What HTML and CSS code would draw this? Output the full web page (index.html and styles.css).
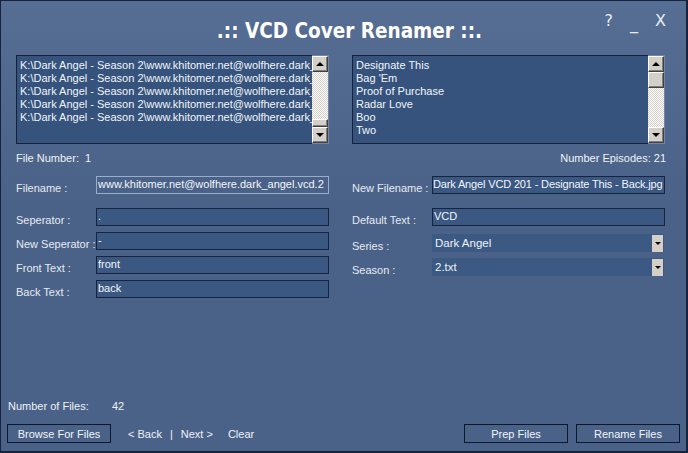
FILE: index.html
```html
<!DOCTYPE html>
<html>
<head>
<meta charset="utf-8">
<link rel="stylesheet" href="styles.css">
</head>
<body>
<div class="window">
  <header class="header">
    <div></div>
    <h1 class="title">.:: VCD Cover Renamer ::.</h1>
    <div class="controls"><span>?</span><span class="min">_</span><span>X</span></div>
  </header>

  <section class="lists">
    <div class="listbox">
      <ul class="list left-list">
        <li>K:\Dark Angel - Season 2\www.khitomer.net@wolfhere.dark_angel.vcd.201.jpg</li>
        <li>K:\Dark Angel - Season 2\www.khitomer.net@wolfhere.dark_angel.vcd.202.jpg</li>
        <li>K:\Dark Angel - Season 2\www.khitomer.net@wolfhere.dark_angel.vcd.203.jpg</li>
        <li>K:\Dark Angel - Season 2\www.khitomer.net@wolfhere.dark_angel.vcd.204.jpg</li>
        <li>K:\Dark Angel - Season 2\www.khitomer.net@wolfhere.dark_angel.vcd.205.jpg</li>
      </ul>
      <div class="scrollbar">
        <div class="sb-btn"><span class="arrow up"></span></div>
        <div class="sb-track"></div>
        <div class="sb-thumb thumb-small"></div>
        <div class="sb-btn"><span class="arrow down"></span></div>
      </div>
    </div>
    <div class="listbox">
      <ul class="list right-list">
        <li>Designate This</li>
        <li>Bag 'Em</li>
        <li>Proof of Purchase</li>
        <li>Radar Love</li>
        <li>Boo</li>
        <li>Two</li>
      </ul>
      <div class="scrollbar">
        <div class="sb-btn"><span class="arrow up"></span></div>
        <div class="sb-thumb"></div>
        <div class="sb-track"></div>
        <div class="sb-btn"><span class="arrow down"></span></div>
      </div>
    </div>
  </section>

  <section class="counts">
    <span>File Number:&nbsp; 1</span>
    <span>Number Episodes: 21</span>
  </section>

  <section class="form">
    <div class="col">
      <div class="row first"><label>Filename :</label><div class="field focus">www.khitomer.net@wolfhere.dark_angel.vcd.2</div></div>
      <div class="row"><label>Seperator :</label><div class="field">.</div></div>
      <div class="row"><label>New Seperator :</label><div class="field">-</div></div>
      <div class="row"><label>Front Text :</label><div class="field">front</div></div>
      <div class="row"><label>Back Text :</label><div class="field">back</div></div>
    </div>
    <div class="col">
      <div class="row first"><label>New Filename :</label><div class="field tight">Dark Angel VCD 201 - Designate This - Back.jpg</div></div>
      <div class="row"><label>Default Text :</label><div class="field">VCD</div></div>
      <div class="row sel-row"><label>Series :</label><div class="select"><span>Dark Angel</span><span class="drop"><span class="arrow down"></span></span></div></div>
      <div class="row"><label>Season :</label><div class="select"><span>2.txt</span><span class="drop"><span class="arrow down"></span></span></div></div>
    </div>
  </section>

  <section class="files-count">
    <span class="fc-label">Number of Files:</span><span>42</span>
  </section>

  <footer class="footer">
    <div class="footer-left">
      <button class="btn">Browse For Files</button>
      <nav class="nav">
        <span>&lt; Back</span><span class="sep">|</span><span>Next &gt;</span><span class="clear">Clear</span>
      </nav>
    </div>
    <div class="footer-right">
      <button class="btn">Prep Files</button>
      <button class="btn">Rename Files</button>
    </div>
  </footer>
</div>
</body>
</html>
```

FILE: styles.css
```css
* { box-sizing: border-box; }
html, body { margin: 0; padding: 0; background: #1a2336; }
body {
  font-family: "Liberation Sans", Arial, sans-serif;
  font-size: 11px;
  color: #eef2f7;
}
.window {
  width: 688px;
  height: 453px;
  border: 1px solid #18223a;
  border-right-width: 2px;
  border-bottom-width: 2px;
  background: linear-gradient(#566e93, #4a6288 45%, #4a6288);
  display: flex;
  flex-direction: column;
  padding: 0 6px 0 6px;
}
.header {
  display: grid;
  grid-template-columns: 1fr auto 1fr;
  height: 54px;
  align-items: start;
}
.title {
  margin: 18px 0 0 12px;
  font-family: "DejaVu Sans Condensed", "DejaVu Sans", Verdana, sans-serif;
  font-weight: bold;
  font-size: 20.5px;
  line-height: 24px;
  color: #ffffff;
  white-space: nowrap;
}
.controls {
  justify-self: end;
  display: flex;
  gap: 17px;
  margin: 10px 14px 0 0;
  font-family: "DejaVu Sans", sans-serif;
  font-size: 16px;
  line-height: 20px;
  color: #e8edf4;
}
.controls .min { position: relative; top: 3px; }

.lists {
  display: flex;
  gap: 23px;
  padding-left: 9px;
  height: 89px;
}
.listbox {
  display: flex;
  width: 313px;
  height: 89px;
}
.list {
  flex: 1;
  margin: 0;
  padding: 3px 0 0 3px;
  list-style: none;
  background: #35537d;
  border: 1px solid #17223a;
  border-right: none;
  overflow: hidden;
}
.list li {
  white-space: nowrap;
  overflow: hidden;
  line-height: 13px;
  height: 13px;
  color: #f2f5f9;
}
.scrollbar {
  width: 17px;
  display: flex;
  flex-direction: column;
  border: 1px solid #6f86a8;
  border-left: none;
}
.sb-btn, .sb-thumb {
  height: 16px;
  background: #d4d0c8;
  border: 1px solid;
  border-color: #ffffff #404040 #404040 #ffffff;
  box-shadow: inset -1px -1px #808080;
  display: flex;
  align-items: center;
  justify-content: center;
  flex: none;
}
.thumb-small { height: 8px; }
.sb-track {
  flex: 1;
  background: repeating-conic-gradient(#ffffff 0 25%, #d4d0c8 0 50%) 0 0 / 2px 2px;
}
.arrow {
  width: 0; height: 0;
  border-left: 4px solid transparent;
  border-right: 4px solid transparent;
}
.arrow.up { border-bottom: 4px solid #000; }
.arrow.down { border-top: 4px solid #000; }

.counts {
  display: flex;
  justify-content: space-between;
  padding: 8px 14px 0 9px;
  height: 32px;
  line-height: 13px;
}

.form {
  display: flex;
  gap: 23px;
  padding-left: 9px;
}
.col {
  width: 313px;
  display: flex;
  flex-direction: column;
  gap: 6px;
}
.row {
  display: flex;
  height: 18px;
}
.row.first { margin-bottom: 8px; }
.row.sel-row { margin-top: 2px; }
.row label {
  width: 80px;
  flex: none;
  padding-top: 6px;
  line-height: 13px;
  white-space: nowrap;
  color: #e6ebf2;
}
.field {
  width: 233px;
  height: 18px;
  background: #3a5882;
  border: 1px solid #18243e;
  padding: 0 1px;
  line-height: 15px;
  font-size: 11px;
  white-space: nowrap;
  overflow: hidden;
  color: #f4f6fa;
}
.field.tight { letter-spacing: -0.15px; padding: 0; }
.field.focus {
  background: #4a6288;
  border-color: #98adc9;
}
.select {
  width: 232px;
  height: 18px;
  background: #3b5983;
  display: flex;
  justify-content: space-between;
  align-items: center;
  padding-left: 3px;
  font-size: 11.5px;
}
.drop {
  width: 11px;
  height: 17px;
  margin-right: 1px;
  background: #d4d0c8;
  display: flex;
  align-items: center;
  justify-content: center;
}
.drop .arrow { border-left-width: 3px; border-right-width: 3px; border-top-width: 3px; }

.files-count {
  margin-top: auto;
  display: flex;
  padding-left: 1px;
  line-height: 13px;
  height: 13px;
  margin-bottom: 11px;
}
.fc-label { width: 104px; }

.footer {
  display: flex;
  justify-content: space-between;
  height: 19px;
  margin-bottom: 8px;
}
.footer-left, .footer-right { display: flex; align-items: center; }
.footer-right { gap: 8px; }
.btn {
  width: 104px;
  height: 19px;
  background: transparent;
  border: 1px solid #0e172b;
  color: #f2f5f9;
  font-family: "Liberation Sans", Arial, sans-serif;
  font-size: 11px;
  padding: 0;
  line-height: 16px;
}
.nav {
  display: flex;
  margin-left: 17px;
  font-size: 11px;
  color: #eef2f7;
}
.nav .sep { margin: 0 8px; }
.nav .clear { margin-left: 15px; }
```
